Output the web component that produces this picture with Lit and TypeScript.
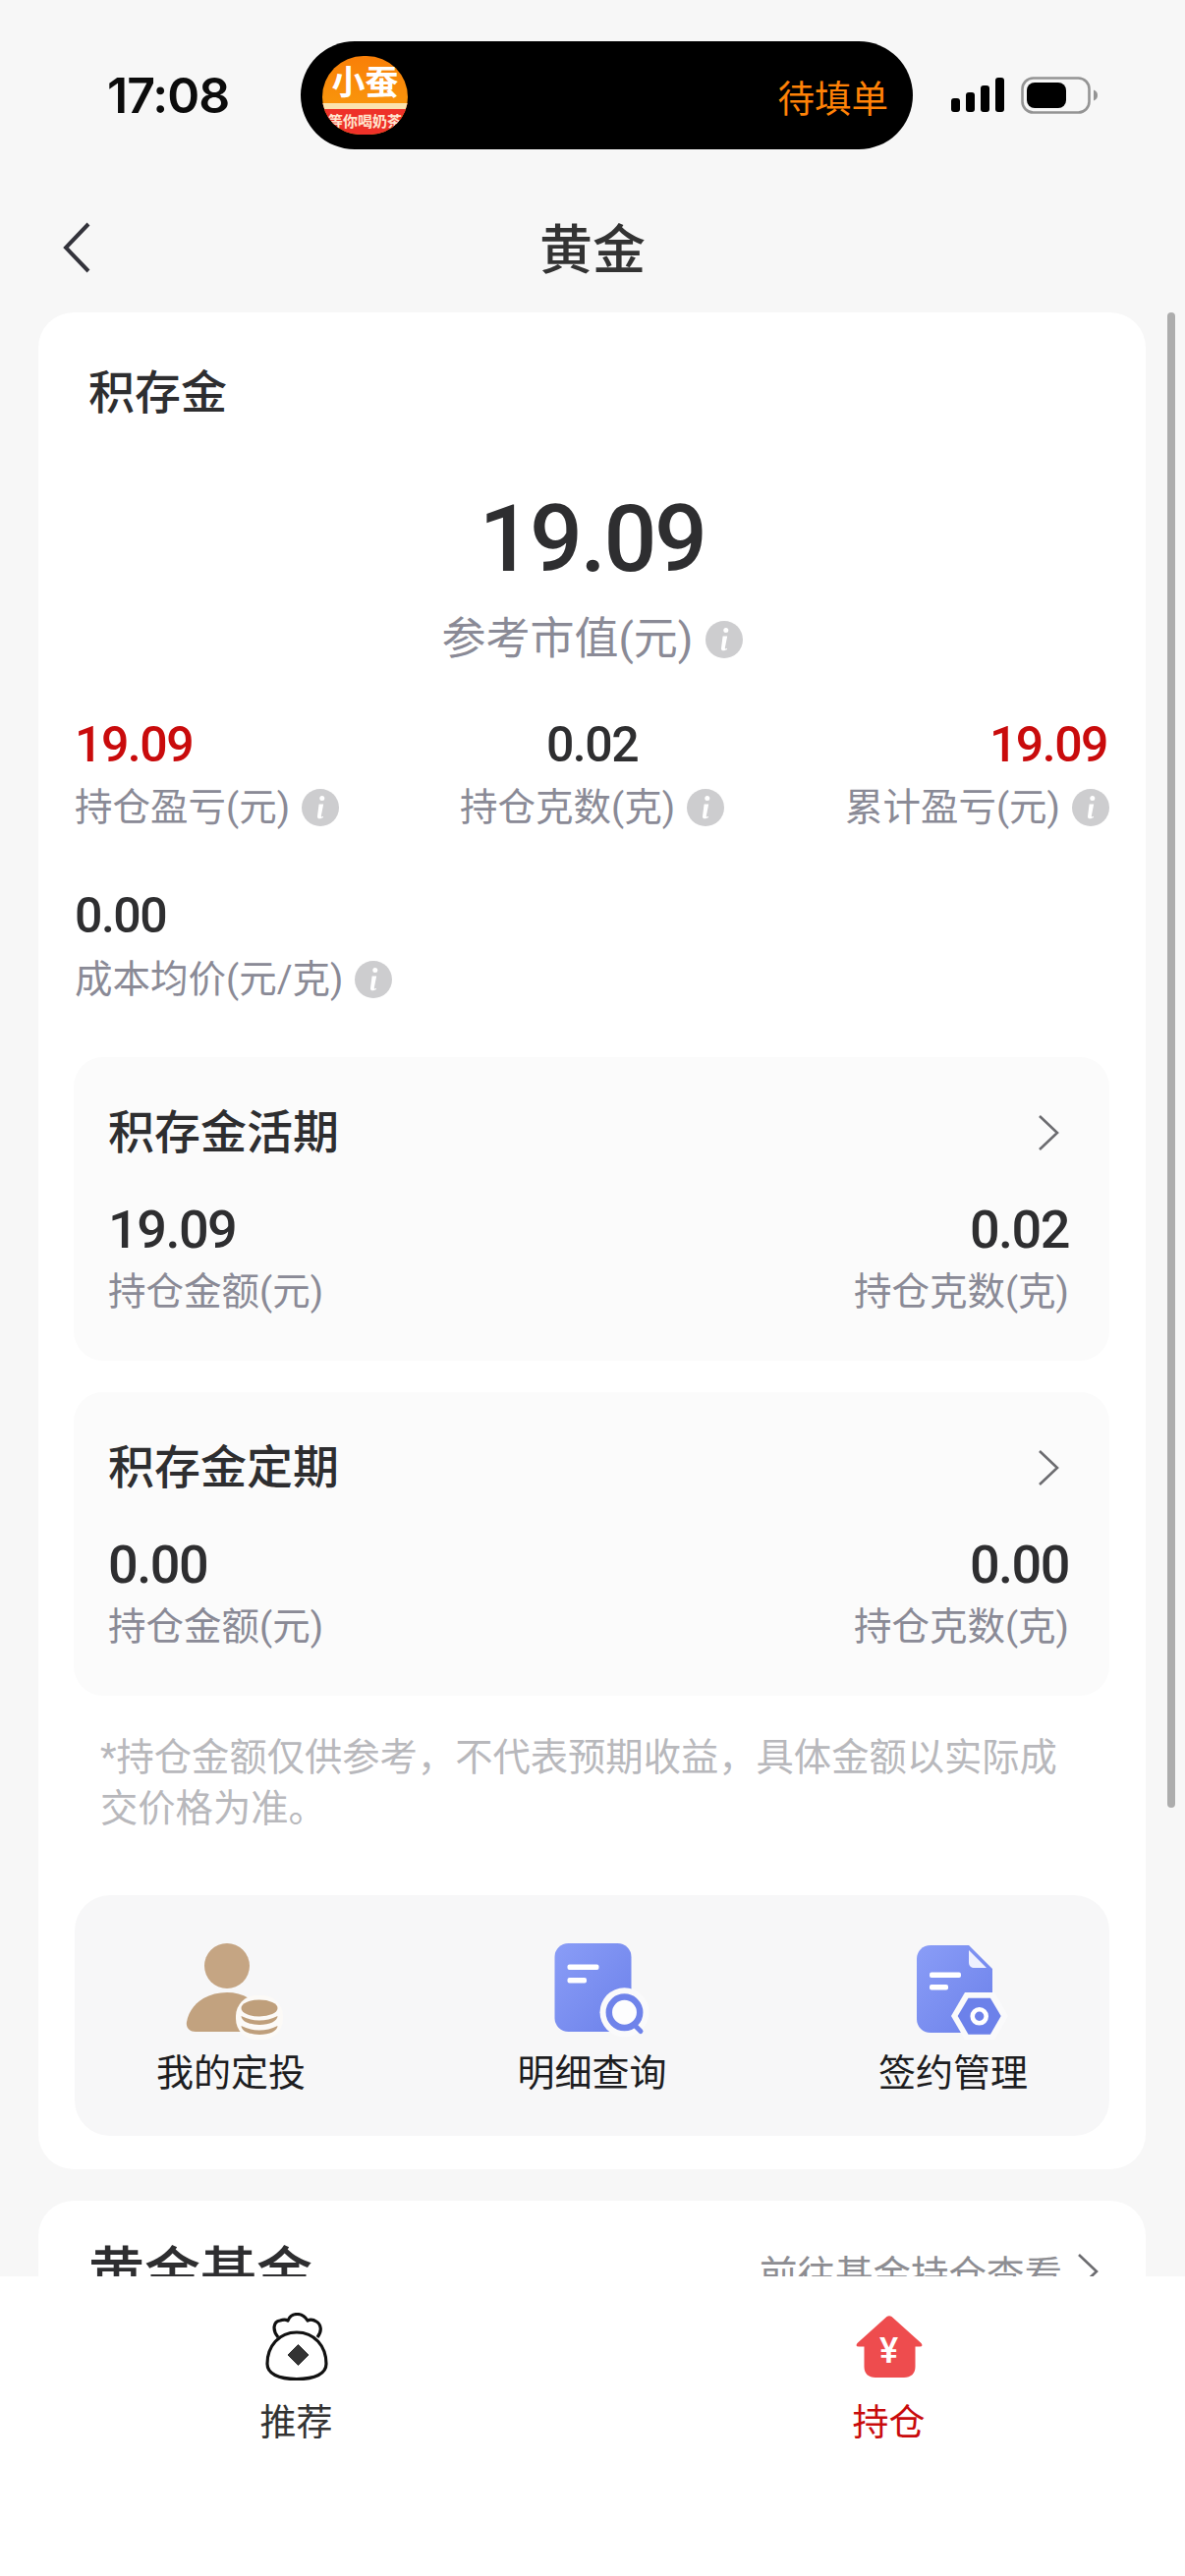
import { LitElement, html, css, svg } from 'lit';
import { customElement } from 'lit/decorators.js';

const infoIcon = html`<svg class="info" viewBox="0 0 38 38">
  <circle cx="19" cy="19" r="19" fill="#cdcdcf"></circle>
  <circle cx="20.8" cy="9.6" r="2.5" fill="#fff"></circle>
  <path d="M17.6 15.4h4.6l-2.4 12.2c-.2 1 .9 1 2 .2l.3 1c-2.100 1.900-6.400 2.400-6.100-.8z" fill="#fff"></path>
</svg>`;

const chevron = html`<svg class="chev" viewBox="0 0 24 38">
  <path d="M3 2l18 17L3 36" fill="none" stroke="#6c6c70" stroke-width="2.600"></path>
</svg>`;

const personIcon = html`<svg class="act-icon" viewBox="0 0 100 100">
  <circle cx="46" cy="23" r="23" fill="#c5a583"></circle>
  <path d="M14 90C8 90 4 86 5 80 8 62 25 50 46 50c20 0 38 12 42 40z" fill="#c2a27f"></path>
  <rect x="55" y="53" width="48" height="45" rx="21" fill="#fcfaf7"></rect>
  <ellipse cx="79" cy="66" rx="18.500" ry="8.500" fill="#bf9f7b"></ellipse>
  <path d="M60.500 74Q79 83 97.500 74c0 5-8 9-18.500 9s-18.500-4-18.500-9z" fill="#bf9f7b"></path>
  <path d="M60.500 84Q79 93 97.500 84c0 5-8 9-18.500 9s-18.500-4-18.500-9z" fill="#bf9f7b"></path>
</svg>`;

const searchIcon = html`<svg class="act-icon" viewBox="0 0 100 100">
  <defs>
    <linearGradient id="blue1" x1="0" y1="0" x2="1" y2="1">
      <stop offset="0" stop-color="#8a9df7"></stop>
      <stop offset="1" stop-color="#6c81ea"></stop>
    </linearGradient>
  </defs>
  <rect x="11.500" y="0" width="78" height="90" rx="14" fill="url(#blue1)"></rect>
  <rect x="24.500" y="21.500" width="32" height="5.500" rx="2" fill="#fff"></rect>
  <rect x="24.500" y="35" width="19.500" height="5.500" rx="2" fill="#fff"></rect>
  <circle cx="82.500" cy="70.300" r="25" fill="#fafafb"></circle>
  <path d="M93 83.500l6 6" stroke="#6f83ea" stroke-width="5" stroke-linecap="round"></path>
  <circle cx="82.500" cy="70.300" r="15.700" fill="#fdfdfe" stroke="#6f83ea" stroke-width="6.500"></circle>
</svg>`;

const signIcon = html`<svg class="act-icon" viewBox="0 0 100 100">
  <defs>
    <linearGradient id="blue2" x1="0" y1="0" x2="1" y2="1">
      <stop offset="0" stop-color="#8a9df7"></stop>
      <stop offset="1" stop-color="#6c81ea"></stop>
    </linearGradient>
  </defs>
  <path d="M27 2h39l24 24v51c0 8-6 14-14 14H27c-8 0-14-6-14-14V16c0-8 6-14 14-14z" fill="url(#blue2)"></path>
  <path d="M66 7v12c0 4 2 6 6 6h12z" fill="#eef0fe"></path>
  <rect x="26" y="29.500" width="32" height="5.500" rx="2" fill="#fff"></rect>
  <rect x="26" y="42" width="19" height="5.500" rx="2" fill="#fff"></rect>
  <path d="M62 50h30l14 24-14 24H62L48 74z" fill="#fafafb"></path>
  <path d="M65.500 55.800h22.400L98.700 74 87.900 92.800H65.500L54.700 74z" fill="#6c81ea"></path>
  <circle cx="76.700" cy="74.300" r="7" fill="none" stroke="#fff" stroke-width="4.600"></circle>
</svg>`;

const bagIcon = html`<svg class="tab-icon" viewBox="0 0 66 70">
  <path d="M14 25C8 18 9 9 16 8c3-1 6-1 8 0 2-5 6-6.500 9.500-6.500S41 3 44 8c2-1 6-1 9 1 5 3 6 10 1 16" fill="#fff" stroke="#111" stroke-width="3.200" stroke-linejoin="round"></path>
  <path d="M3 52C3 34 15 20 33 20s30 14 30 32c0 10-11 15.500-30 15.500S3 62 3 52z" fill="#fff" stroke="#111" stroke-width="3.200"></path>
  <path d="M34.500 32.500l10.500 10.500-10.500 10.500L24 43z" fill="#333" stroke="#333" stroke-linejoin="round"></path>
</svg>`;

const homeIcon = html`<svg class="tab-icon" viewBox="0 0 70 66">
  <path d="M32.500 1Q35-.5 37.500 1l30 27q2.500 3.500-1.500 3.500h-4.500V52c0 7-4.500 11-11.500 11H21c-7 0-11.500-4-11.500-11V31.500H4Q0 31.500 2.500 28z" fill="#ee4c4e"></path>
</svg>`;

@customElement('app-root')
export class AppRoot extends LitElement {
  static styles = css`
    :host {
      display: block;
      position: relative;
      width: 1206px;
      height: 2622px;
      overflow: hidden;
      background: #f7f7f7;
      font-family: Roboto, "Noto Sans CJK SC", sans-serif;
      color: #2e2e30;
    }
    .status {
      height: 110px;
      padding-top: 42px;
      display: flex;
      align-items: center;
    }
    .time {
      width: 197px;
      margin-left: 109px;
      font-family: Inter, sans-serif;
      font-size: 50px;
      font-weight: 600;
      letter-spacing: -1px;
      color: #0c0c0c;
    }
    .pill {
      width: 623px;
      height: 110px;
      border-radius: 55px;
      background: #000;
      display: flex;
      align-items: center;
      justify-content: space-between;
      padding: 0 25px 0 22px;
      box-sizing: border-box;
    }
    .logo {
      width: 87px;
      height: 80px;
      border-radius: 44px 44px 40px 40px;
      overflow: hidden;
      background: linear-gradient(#f97f08, #f9a20e);
      display: flex;
      flex-direction: column;
      align-items: center;
    }
    .logo-main {
      height: 48px;
      line-height: 54px;
      font-size: 34px;
      font-weight: 700;
      color: #fff;
      white-space: nowrap;
    }
    .logo-sub {
      position: relative;
      width: 100%;
      height: 32px;
      line-height: 26px;
      background: #ee3129;
      border-top: 6px solid #fbe3ae;
      box-sizing: border-box;
      text-align: center;
      font-size: 15px;
      font-weight: 700;
      color: #ffe6cf;
      white-space: nowrap;
      overflow: hidden;
    }
    .pill-text {
      font-size: 37.500px;
      color: #ff8207;
    }
    .signal {
      width: 54px;
      height: 36px;
      margin-left: 39px;
    }
    .battery {
      width: 80px;
      height: 38px;
      margin-left: 17px;
    }
    .nav {
      height: 166px;
      padding-top: 30px;
      box-sizing: border-box;
      display: flex;
      align-items: center;
      justify-content: center;
      position: relative;
    }
    .nav-title {
      font-size: 54px;
      font-weight: 500;
      color: #333;
    }
    .back {
      position: absolute;
      left: 63px;
      top: 74px;
      width: 30px;
      height: 52px;
    }
    .card {
      margin: 0 40px 0 39px;
      background: #fff;
      border-radius: 36px;
    }
    .main {
      height: 1890px;
      padding-top: 52px;
      box-sizing: border-box;
    }
    .card-title {
      padding-left: 51px;
      font-size: 47px;
      line-height: 60px;
      font-weight: 500;
    }
    .big {
      margin-top: 59px;
      text-align: center;
      font-size: 95px;
      line-height: 120px;
      font-weight: 500;
      letter-spacing: -2.500px;
    }
    .big-label {
      margin-top: 14px;
      display: flex;
      justify-content: center;
      align-items: center;
      gap: 12px;
      font-size: 45px;
      line-height: 56px;
      color: #8a8a96;
    }
    .stats {
      margin-top: 49px;
      padding: 0 37px;
      display: grid;
      grid-template-columns: 1fr 1fr 1fr;
      row-gap: 55px;
    }
    .stat:nth-child(2) {
      text-align: center;
    }
    .stat:nth-child(3) {
      text-align: right;
    }
    .stat:nth-child(3) .val {
      padding-right: 2px;
    }
    .val {
      font-size: 50px;
      line-height: 60px;
      font-weight: 500;
      letter-spacing: -1.500px;
    }
    .red {
      color: #c90b0c;
    }
    .lab {
      margin-top: 9px;
      font-size: 38.500px;
      line-height: 50px;
      color: #8a8a96;
      white-space: nowrap;
    }
    .stat:nth-child(4) .lab {
      margin-top: 10px;
    }
    .lab .info,
    .big-label .info {
      width: 38px;
      height: 38px;
      vertical-align: -6px;
      margin-left: 12px;
    }
    .big-label .info {
      margin-left: 0;
    }
    .sub {
      margin: 0 37px 32px 36px;
      height: 309px;
      box-sizing: border-box;
      padding: 47px 41px 0 35px;
      border-radius: 30px;
      background: #fbfbfb;
    }
    .stats + .sub {
      margin-top: 54px;
    }
    .sub-head {
      display: flex;
      justify-content: space-between;
      align-items: center;
      font-size: 47px;
      line-height: 60px;
      font-weight: 500;
    }
    .chev {
      width: 24px;
      height: 38px;
      margin-right: 9px;
    }
    .sub-row {
      margin-top: 39px;
      display: flex;
      justify-content: space-between;
    }
    .sub-row > div:last-child {
      text-align: right;
    }
    .sub .lab {
      margin-top: 8px;
    }
    .sub .val {
      font-size: 54px;
    }
    .note {
      margin: 37px 56px 0 63px;
      font-size: 38.300px;
      line-height: 52px;
      color: #b8b8bc;
    }
    .actions {
      margin: 62px 37px 0 37px;
      height: 245px;
      border-radius: 36px;
      background: #f7f7f8;
      display: flex;
      justify-content: space-between;
      padding: 49px 83px 0;
      box-sizing: border-box;
    }
    .action {
      width: 152px;
      display: flex;
      flex-direction: column;
      align-items: center;
      font-size: 38px;
      line-height: 50px;
      color: #1d1d1f;
    }
    .act-icon {
      width: 100px;
      height: 100px;
      margin-bottom: 7px;
      overflow: visible;
    }
    .gold {
      margin-top: 32px;
      height: 200px;
      padding: 40px 45px 0 51px;
      display: flex;
      justify-content: space-between;
    }
    .gold-title {
      font-size: 57px;
      line-height: 70px;
      font-weight: 500;
    }
    .gold-link {
      height: 64px;
      display: flex;
      align-items: center;
      gap: 14px;
      font-size: 38.500px;
      color: #8d8d92;
    }
    .gold-link .chev {
      margin-right: 2px;
    }
    .scroll {
      position: absolute;
      left: 1188px;
      top: 318px;
      width: 8px;
      height: 1522px;
      border-radius: 4px;
      background: #adadad;
    }
    .tabs {
      position: absolute;
      left: 0;
      right: 0;
      top: 2317px;
      bottom: 0;
      background: #fff;
      display: grid;
      grid-template-columns: 1fr 1fr;
      padding-top: 37px;
    }
    .tab {
      display: flex;
      flex-direction: column;
      align-items: center;
      font-size: 37px;
      line-height: 50px;
      color: #333;
    }
    .tab.on {
      color: #c90b0c;
    }
    .tab-icon {
      width: 66px;
      height: 70px;
      margin-bottom: 18px;
    }
    .home {
      position: relative;
      display: block;
      width: 70px;
      height: 70px;
      margin-bottom: 18px;
    }
    .home .tab-icon {
      width: 70px;
      height: 66px;
      margin: 3px 0 0;
    }
    .yen {
      position: absolute;
      left: 0;
      right: 0;
      top: 19px;
      text-align: center;
      font-size: 36px;
      line-height: 40px;
      font-weight: 500;
      color: #fff;
    }
  `;

  renderStat(value: string, label: string, red = false) {
    return html`<div class="stat">
      <div class="val ${red ? 'red' : ''}">${value}</div>
      <div class="lab">${label}${infoIcon}</div>
    </div>`;
  }

  renderSub(title: string, money: string, weight: string) {
    return html`<div class="sub">
      <div class="sub-head"><span>${title}</span>${chevron}</div>
      <div class="sub-row">
        <div><div class="val">${money}</div><div class="lab">持仓金额(元)</div></div>
        <div><div class="val">${weight}</div><div class="lab">持仓克数(克)</div></div>
      </div>
    </div>`;
  }

  render() {
    const bars = [[0, 21, 14], [15, 15, 20], [30, 8, 27], [45, 0, 35]];
    return html`
      <div class="status">
        <div class="time">17:08</div>
        <div class="pill">
          <div class="logo">
            <div class="logo-main">小蚕</div>
            <div class="logo-sub">等你喝奶茶</div>
          </div>
          <div class="pill-text">待填单</div>
        </div>
        <svg class="signal" viewBox="0 0 54 36">
          ${bars.map(([x, y, h]) => svg`<rect x=${x} y=${y} width="9" height=${h} rx="3" fill="#000"></rect>`)}
        </svg>
        <svg class="battery" viewBox="0 0 80 38">
          <rect x="1.500" y="1.500" width="68" height="35" rx="11" fill="none" stroke="#949494" stroke-width="2.600"></rect>
          <rect x="6" y="6" width="40" height="26" rx="8" fill="#000"></rect>
          <path d="M74 13.500c3 1 4 3 4 5.500s-1 4.500-4 5.500z" fill="#949494"></path>
        </svg>
      </div>
      <div class="nav">
        <svg class="back" viewBox="0 0 30 52">
          <path d="M27 2L4 26l23 24" fill="none" stroke="#33333b" stroke-width="4"></path>
        </svg>
        <div class="nav-title">黄金</div>
      </div>
      <div class="card main">
        <div class="card-title">积存金</div>
        <div class="big">19.09</div>
        <div class="big-label">参考市值(元)${infoIcon}</div>
        <div class="stats">
          ${this.renderStat('19.09', '持仓盈亏(元)', true)}
          ${this.renderStat('0.02', '持仓克数(克)')}
          ${this.renderStat('19.09', '累计盈亏(元)', true)}
          ${this.renderStat('0.00', '成本均价(元/克)')}
        </div>
        ${this.renderSub('积存金活期', '19.09', '0.02')}
        ${this.renderSub('积存金定期', '0.00', '0.00')}
        <div class="note">*持仓金额仅供参考，不代表预期收益，具体金额以实际成交价格为准。</div>
        <div class="actions">
          <div class="action">${personIcon}我的定投</div>
          <div class="action">${searchIcon}明细查询</div>
          <div class="action">${signIcon}签约管理</div>
        </div>
      </div>
      <div class="card gold">
        <div class="gold-title">黄金基金</div>
        <div class="gold-link">前往基金持仓查看${chevron}</div>
      </div>
      <div class="scroll"></div>
      <div class="tabs">
        <div class="tab">${bagIcon}推荐</div>
        <div class="tab on">
          <div class="home">${homeIcon}<div class="yen">¥</div></div>
          持仓
        </div>
      </div>
    `;
  }
}
